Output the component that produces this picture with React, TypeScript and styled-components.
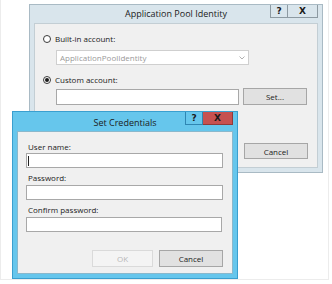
import React from "react";
import styled, { createGlobalStyle, css } from "styled-components";

const Global = createGlobalStyle`
  html, body { margin: 0; padding: 0; background: #ffffff; }
  body { font-family: "Open Sans", "Noto Sans", "Liberation Sans", sans-serif; color: #1e1e1e; }
  * { box-sizing: border-box; }
`;

const Desktop = styled.div`
  position: relative;
  width: 329px;
  height: 280px;
  border: 1px solid #ececec;
  border-top: none;
  background: #ffffff;
  overflow: hidden;
`;

type Variant = "inactive" | "active";

const Win = styled.div<{ $x: number; $y: number; $w: number; $h: number; $v: Variant }>`
  position: absolute;
  left: ${(p) => p.$x}px;
  top: ${(p) => p.$y}px;
  width: ${(p) => p.$w}px;
  height: ${(p) => p.$h}px;
  display: flex;
  flex-direction: column;
  padding: 0 4px 4px 4px;
  ${(p) =>
    p.$v === "active"
      ? css`
          background: #66c6ec;
          border: 1px solid #3a9fcf;
        `
      : css`
          background: #d9e5ec;
          border: 1px solid #a9bac4;
        `}
`;

const TitleBar = styled.div<{ $h: number }>`
  height: ${(p) => p.$h}px;
  display: grid;
  grid-template-columns: 1fr auto 1fr;
  align-items: start;
  margin: 0 -4px;
  padding: 0 4px;
`;

const Title = styled.div<{ $top: number }>`
  grid-column: 2;
  font-size: 9px;
  line-height: 12px;
  padding-top: ${(p) => p.$top}px;
  color: #1b1b1b;
  white-space: nowrap;
`;

const Controls = styled.div`
  grid-column: 3;
  justify-self: end;
  display: flex;
`;

const CtlBtn = styled.div<{ $kind: "help" | "close"; $v: Variant }>`
  height: 13px;
  width: ${(p) => (p.$kind === "help" ? 18 : 30)}px;
  display: flex;
  align-items: center;
  justify-content: center;
  font-family: "DejaVu Sans", sans-serif;
  font-weight: bold;
  font-size: 9px;
  color: #1a1a1a;
  border: 1px solid;
  border-top: none;
  ${(p) =>
    p.$kind === "close" && p.$v === "active"
      ? css`
          background: #c75150;
          border-color: #8f3a3a;
          border-left: none;
        `
      : p.$v === "active"
      ? css`
          background: #66c6ec;
          border-color: #2f86b3;
        `
      : css`
          background: #d9e5ec;
          border-color: #8d9aa2;
          ${p.$kind === "close" && "border-left: none;"}
        `}
`;

const Client = styled.div<{ $v: Variant }>`
  flex: 1;
  display: flex;
  flex-direction: column;
  background: #f0f0f0;
  border: 1px solid ${(p) => (p.$v === "active" ? "#8ab8cc" : "#c3ced4")};
`;

const Row = styled.div<{
  $mt: number;
  $h: number;
  $pl?: number;
  $pr?: number;
  $end?: boolean;
  $gap?: number;
}>`
  display: flex;
  align-items: center;
  margin-top: ${(p) => p.$mt}px;
  height: ${(p) => p.$h}px;
  padding-left: ${(p) => p.$pl ?? 0}px;
  padding-right: ${(p) => p.$pr ?? 0}px;
  justify-content: ${(p) => (p.$end ? "flex-end" : "flex-start")};
  gap: ${(p) => p.$gap ?? 4}px;
`;

const Label = styled.span`
  font-size: 8px;
  line-height: 12px;
  color: #222;
  white-space: nowrap;
`;

const Radio = styled.span<{ $checked?: boolean }>`
  width: 8px;
  height: 8px;
  border-radius: 50%;
  border: 1px solid #3a3a3a;
  background: #fff;
  display: flex;
  align-items: center;
  justify-content: center;
  &::after {
    content: "";
    width: 4px;
    height: 4px;
    border-radius: 50%;
    background: ${(p) => (p.$checked ? "#1a1a1a" : "transparent")};
  }
`;

const Select = styled.div`
  width: 193px;
  height: 15px;
  background: #fff;
  border: 1px solid #cfcfcf;
  display: flex;
  align-items: center;
  justify-content: space-between;
  padding: 0 3px 0 3px;
  font-size: 8px;
  color: #9a9a9a;
`;

const Input = styled.div<{ $w: number; $h: number }>`
  width: ${(p) => p.$w}px;
  height: ${(p) => p.$h}px;
  background: #fff;
  border: 1px solid #a8a8a8;
  display: flex;
  align-items: center;
  padding-left: 1px;
`;

const Caret = styled.span`
  width: 1px;
  height: 10px;
  background: #222;
`;

const Button = styled.div<{ $w: number; $h: number; $disabled?: boolean }>`
  width: ${(p) => p.$w}px;
  height: ${(p) => p.$h}px;
  display: flex;
  align-items: center;
  justify-content: center;
  font-size: 8px;
  background: ${(p) => (p.$disabled ? "#f4f4f4" : "#e1e1e1")};
  border: 1px solid ${(p) => (p.$disabled ? "#dadada" : "#a6a6a6")};
  color: ${(p) => (p.$disabled ? "#b8b8b8" : "#222")};
`;

const Chevron = () => (
  <svg width="6" height="4" viewBox="0 0 6 4">
    <path d="M0.5 0.5 L3 3 L5.5 0.5" fill="none" stroke="#a8a8a8" strokeWidth="0.9" />
  </svg>
);

export default function App() {
  return (
    <>
      <Global />
      <Desktop>
        <Win $x={28} $y={4} $w={294} $h={169} $v="inactive">
          <TitleBar $h={18}>
            <Title $top={3}>Application Pool Identity</Title>
            <Controls>
              <CtlBtn $kind="help" $v="inactive">?</CtlBtn>
              <CtlBtn $kind="close" $v="inactive">X</CtlBtn>
            </Controls>
          </TitleBar>
          <Client $v="inactive">
            <Row $mt={9} $h={12} $pl={8}>
              <Radio />
              <Label>Built-in account:</Label>
            </Row>
            <Row $mt={5} $h={15} $pl={21}>
              <Select>
                <span>ApplicationPoolIdentity</span>
                <Chevron />
              </Select>
            </Row>
            <Row $mt={9} $h={12} $pl={8}>
              <Radio $checked />
              <Label>Custom account:</Label>
            </Row>
            <Row $mt={2} $h={17} $pl={21}>
              <Input $w={183} $h={16} />
              <Button $w={64} $h={17}>Set...</Button>
            </Row>
            <Row $mt={38} $h={16} $pr={9} $end>
              <Button $w={64} $h={16}>Cancel</Button>
            </Row>
          </Client>
        </Win>

        <Win $x={11} $y={111} $w={226} $h={168} $v="active">
          <TitleBar $h={19}>
            <Title $top={5}>Set Credentials</Title>
            <Controls>
              <CtlBtn $kind="help" $v="active">?</CtlBtn>
              <CtlBtn $kind="close" $v="active">X</CtlBtn>
            </Controls>
          </TitleBar>
          <Client $v="active">
            <Row $mt={9} $h={12} $pl={10}>
              <Label>User name:</Label>
            </Row>
            <Row $mt={0} $h={15} $pl={8}>
              <Input $w={197} $h={15}>
                <Caret />
              </Input>
            </Row>
            <Row $mt={4} $h={12} $pl={10}>
              <Label>Password:</Label>
            </Row>
            <Row $mt={1} $h={15} $pl={8}>
              <Input $w={197} $h={15} />
            </Row>
            <Row $mt={4} $h={12} $pl={10}>
              <Label>Confirm password:</Label>
            </Row>
            <Row $mt={1} $h={15} $pl={8}>
              <Input $w={196} $h={15} />
            </Row>
            <Row $mt={18} $h={17} $pr={9} $end $gap={6}>
              <Button $w={61} $h={17} $disabled>OK</Button>
              <Button $w={64} $h={17}>Cancel</Button>
            </Row>
          </Client>
        </Win>
      </Desktop>
    </>
  );
}
